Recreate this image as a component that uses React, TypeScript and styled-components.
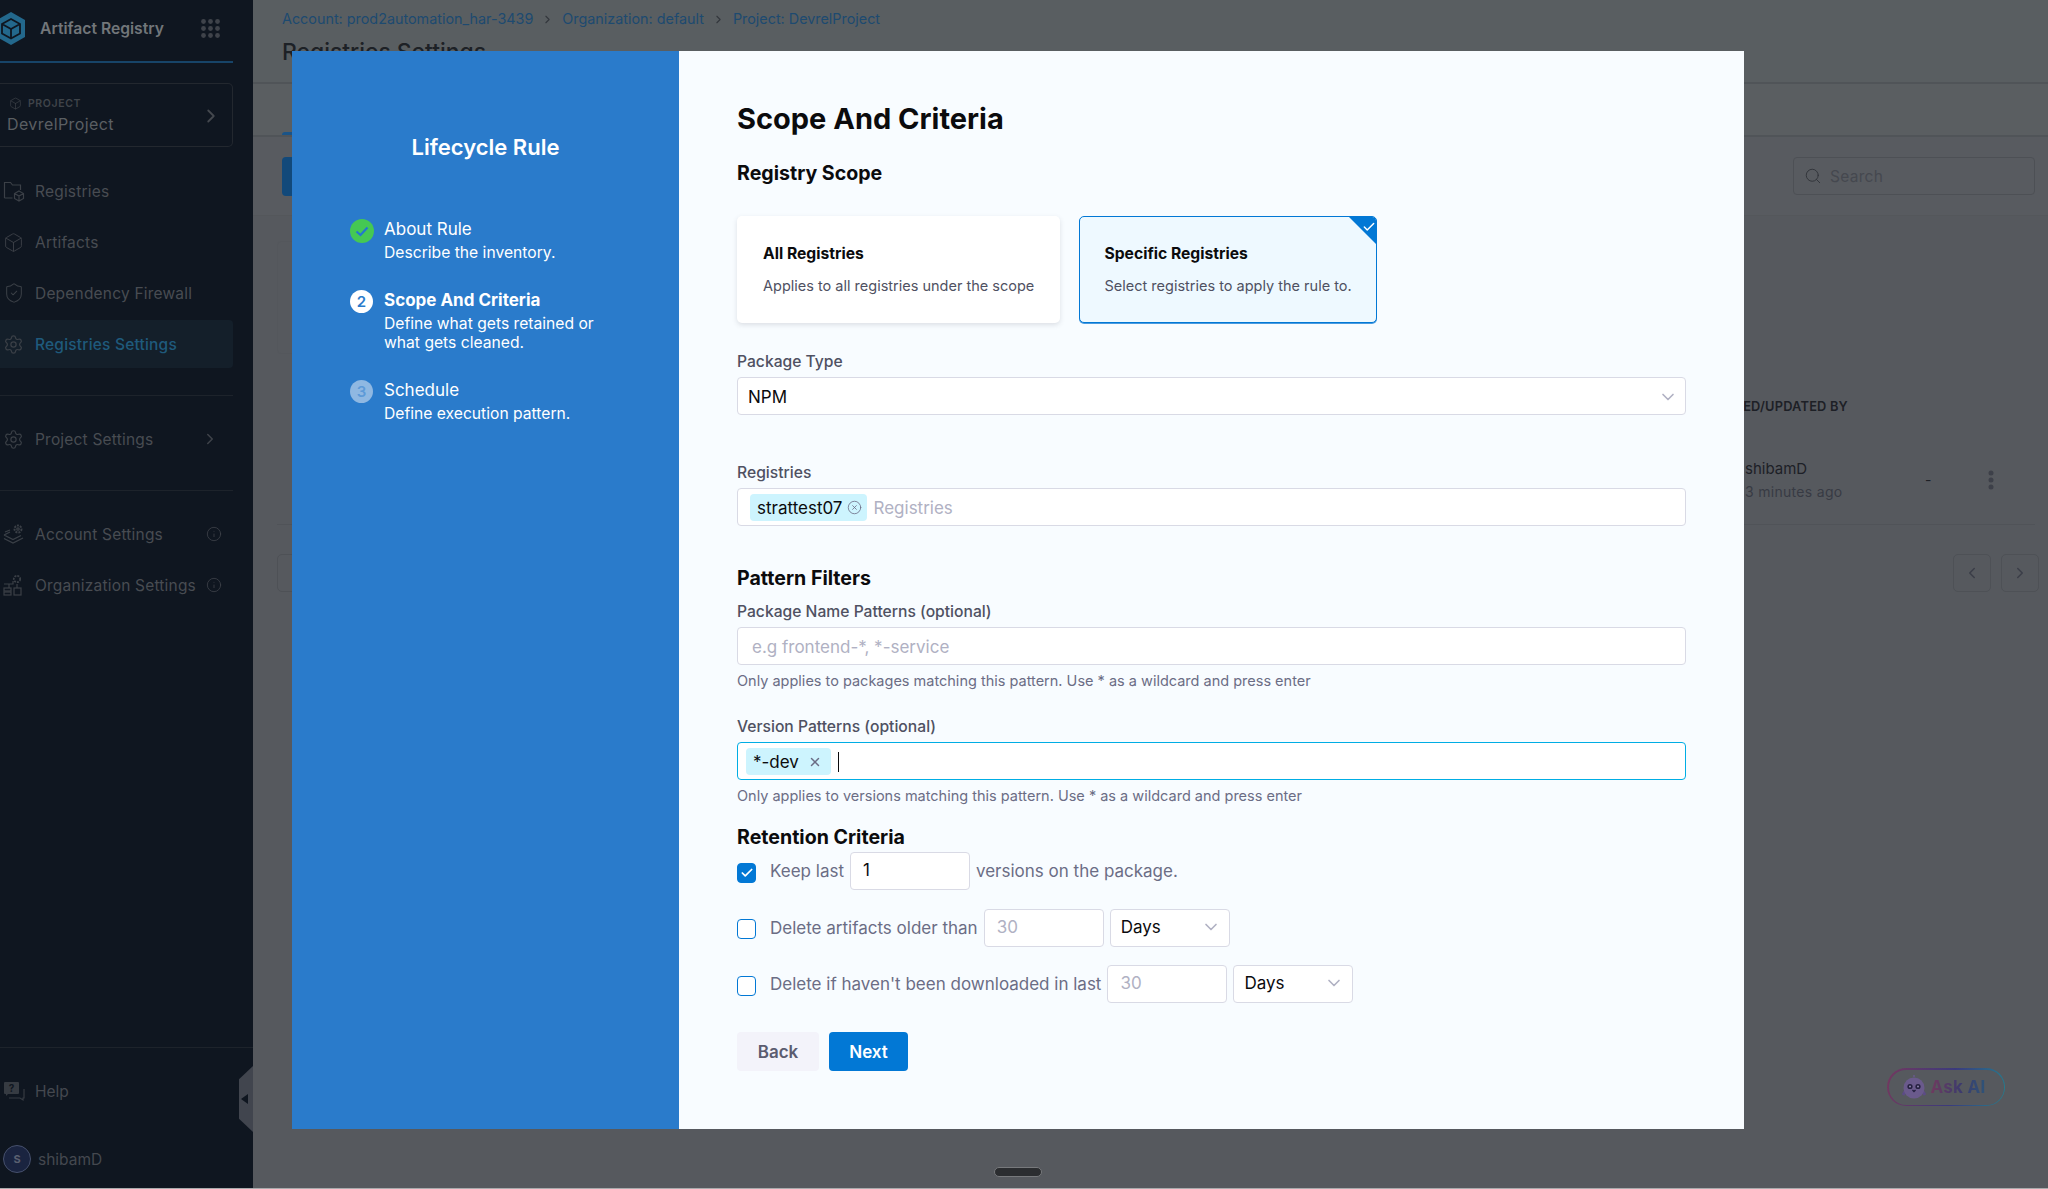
import React from "react";
import styled, { createGlobalStyle } from "styled-components";
import { Box, Check, ChevronDown, ChevronLeft, ChevronRight, CircleX, Info, Search, Settings, ShieldCheck, X } from "lucide-react";

const GlobalStyle = createGlobalStyle`
  html, body {
    margin: 0;
    padding: 0;
    background: #a9abad;
  }
  * {
    box-sizing: border-box;
  }
  body {
    font-family: Inter, "Liberation Sans", sans-serif;
  }
`;

const Page = styled.div`
  display: flex;
  height: 1188px;
  overflow: hidden;
  position: relative;
  width: 2048px;
`;

/* sidebar */

const Sidebar = styled.aside`
  background: #0f1620;
  display: flex;
  flex-direction: column;
  flex-shrink: 0;
  height: 100%;
  width: 253px;
`;

const SideTop = styled.div`
  display: flex;
  flex-direction: column;
  width: 233px;
`;

const Brand = styled.div`
  align-items: center;
  border-bottom: 2px solid #174468;
  display: flex;
  height: 63px;
  padding-bottom: 5px;
`;

const Logo = styled.svg`
  flex-shrink: 0;
  margin-left: -4px;
  margin-right: 14px;
`;

const BrandName = styled.span`
  color: #72767a;
  flex: 1;
  font-size: 15.67px;
  font-weight: 600;
`;

const Dots = styled.svg`
  margin-right: 13px;
`;

const ProjectBox = styled.div`
  align-items: center;
  border: 1px solid #23282f;
  border-left: 0;
  border-radius: 0 5px 5px 0;
  display: flex;
  height: 64px;
  justify-content: space-between;
  margin-top: 20px;
  padding: 2px 10px 0 7px;
`;

const ProjectLabel = styled.div`
  align-items: center;
  color: #3f444a;
  display: flex;
  font-size: 10.5px;
  font-weight: 600;
  gap: 6px;
  letter-spacing: 0.6px;
  margin-left: 2px;
`;

const ProjectName = styled.div`
  color: #5b5f63;
  font-size: 16px;
  letter-spacing: 0.4px;
  line-height: 22px;
  margin-top: 3px;
`;

const Nav = styled.nav<{ $top: number }>`
  display: flex;
  flex-direction: column;
  gap: 3px;
  margin-top: ${({ $top }) => $top}px;
`;

const NavItem = styled.div<{ $active?: boolean }>`
  align-items: center;
  background: ${({ $active }) => ($active ? "#141f2a" : "transparent")};
  border-radius: 0 4px 4px 0;
  color: ${({ $active }) => ($active ? "#1f5a7c" : "#484c52")};
  display: flex;
  font-size: 15.5px;
  font-weight: ${({ $active }) => ($active ? 500 : 400)};
  height: 48px;
  letter-spacing: 0.2px;
  padding-left: 3px;
  padding-right: 11px;
`;

const NavIcon = styled.span`
  align-items: center;
  color: #3b4047;
  display: flex;
  flex-shrink: 0;
  height: 22px;
  margin-right: 10px;
  width: 22px;
`;

const NavText = styled.span`
  flex: 1;
  white-space: nowrap;
`;

const NavChevron = styled(ChevronRight)`
  margin-right: 3px;
`;

const SideRule = styled.div`
  background: #1d232b;
  height: 1px;
  margin-top: 27px;
`;

const SideBottom = styled.div`
  border-top: 1px solid #1d232b;
  display: flex;
  flex-direction: column;
  margin-top: auto;
  height: 141px;
`;

const HelpRow = styled.div`
  align-items: center;
  color: #44484f;
  display: flex;
  font-size: 15.5px;
  height: 44px;
  margin-top: 21px;
  padding-left: 3px;
`;

const UserRow = styled.div`
  align-items: center;
  color: #44484f;
  display: flex;
  font-size: 15.5px;
  gap: 7px;
  margin-top: 32px;
  padding-left: 3px;
`;

const Avatar = styled.div`
  align-items: center;
  background: #1a2440;
  border: 1px solid #46506c;
  border-radius: 50%;
  color: #5a6070;
  display: flex;
  font-size: 11px;
  font-weight: 700;
  height: 28px;
  justify-content: center;
  width: 28px;
`;

const CollapseTab = styled.div`
  background: #41454e;
  clip-path: polygon(100% 0, 100% 100%, 0 80%, 0 20%);
  height: 66px;
  left: 239px;
  position: absolute;
  top: 1066px;
  width: 14px;

  &::after {
    border-bottom: 5px solid transparent;
    border-right: 7px solid #0f1620;
    border-top: 5px solid transparent;
    content: "";
    left: 2px;
    position: absolute;
    top: 28px;
  }
`;

/* dimmed page behind the dialog */

const Main = styled.main`
  background: #56595e;
  display: flex;
  flex: 1;
  flex-direction: column;
  min-width: 0;
`;

const PageHead = styled.header`
  background: #595e61;
  border-bottom: 2px solid #505458;
  height: 84px;
  padding: 10px 0 0 29px;
`;

const Crumbs = styled.div`
  align-items: center;
  color: #1d4a70;
  display: flex;
  font-size: 14.37px;
  gap: 8px;
  line-height: 18px;
`;

const PageTitle = styled.h1`
  color: #1d2126;
  font-size: 22.9px;
  font-weight: 500;
  line-height: 30px;
  margin: 9px 0 0;
`;

const TabRow = styled.div`
  background: #5a5e61;
  border-bottom: 2px solid #505458;
  height: 53px;
  padding-left: 29px;
  position: relative;
`;

const TabMark = styled.div`
  background: #1b5487;
  border-radius: 3px 3px 0 0;
  height: 3px;
  margin-top: 48px;
  width: 40px;
`;

const Toolbar = styled.div`
  align-items: center;
  background: #585b60;
  border-bottom: 1px solid #54575b;
  display: flex;
  height: 79px;
  justify-content: space-between;
  padding: 0 13px 0 29px;
`;

const NewButton = styled.div`
  background: #12497a;
  border-radius: 4px;
  height: 39px;
  width: 120px;
`;

const SearchBox = styled.div`
  align-items: center;
  border: 1px solid #4d5055;
  border-radius: 4px;
  color: #45484f;
  display: flex;
  font-size: 15.5px;
  gap: 8px;
  height: 38px;
  letter-spacing: 0.3px;
  padding-left: 10px;
  width: 242px;
`;

const Content = styled.div`
  display: flex;
  flex-direction: column;
  padding: 25px 9px 0 24px;
`;

const SummaryCard = styled.div`
  border: 1px solid #54575c;
  border-radius: 4px;
  height: 113px;
  width: 400px;
`;

const TableGrid = styled.div`
  display: grid;
  grid-template-columns: 1423px 225px 50px 1fr;
`;

const TableHead = styled(TableGrid)`
  color: #1d2026;
  font-size: 12.8px;
  font-weight: 600;
  letter-spacing: 0.2px;
  line-height: 16px;
  margin-top: 45px;
`;

const TableRow = styled(TableGrid)`
  align-items: center;
  border-bottom: 1px solid #505358;
  height: 110px;
  margin-right: 4px;
  padding-top: 20px;
`;

const OwnerCell = styled.div`
  padding-left: 45px;
`;

const OwnerName = styled.div`
  color: #1d2026;
  font-size: 15px;
  line-height: 22px;
`;

const OwnerTime = styled.div`
  color: #383b44;
  font-size: 14px;
  letter-spacing: 0.3px;
  line-height: 20px;
  margin-top: 2px;
`;

const Dash = styled.div`
  color: #1d2026;
  font-size: 14px;
`;

const Kebab = styled.svg`
  margin-left: 13px;
`;

const Pager = styled.div`
  display: flex;
  gap: 10px;
  justify-content: space-between;
  margin-top: 29px;
`;

const PagerGroup = styled.div`
  display: flex;
  gap: 10px;
`;

const PagerButton = styled.div`
  align-items: center;
  border: 1px solid #4e5156;
  border-radius: 5px;
  color: #3b3e48;
  display: flex;
  height: 38px;
  justify-content: center;
  width: 38px;
`;

const PagerLeft = styled(PagerButton)`
  width: 40px;
`;

const AskAi = styled.div`
  background: linear-gradient(100deg, #74375f, #3b3a7c 55%, #237f90);
  border-radius: 19px;
  bottom: 82px;
  height: 38px;
  padding: 1.5px;
  position: absolute;
  right: 43px;
  width: 118px;
`;

const AskAiInner = styled.div`
  align-items: center;
  background: #56595e;
  border-radius: 17px;
  display: flex;
  gap: 5px;
  height: 100%;
  padding-left: 13px;
`;

const AskAiText = styled.span`
  background: linear-gradient(90deg, #6f3a5f, #3c3a6e 55%, #2d5478);
  background-clip: text;
  -webkit-background-clip: text;
  color: transparent;
  font-size: 17px;
  font-weight: 700;
  letter-spacing: 0.3px;
`;

const Handle = styled.div`
  background: #2b2d30;
  border: 1px solid #77797c;
  border-radius: 5px;
  height: 10px;
  left: 994px;
  position: absolute;
  top: 1167px;
  width: 48px;
`;

/* dialog */

const Dialog = styled.section`
  display: flex;
  height: 1078px;
  left: 292px;
  position: absolute;
  top: 51px;
  width: 1452px;
`;

const StepPanel = styled.div`
  background: #2a7bcb;
  color: #fff;
  flex-shrink: 0;
  padding-top: 81px;
  width: 387px;
`;

const StepPanelTitle = styled.h2`
  font-size: 22px;
  font-weight: 600;
  line-height: 30px;
  margin: 0;
  text-align: center;
`;

const StepList = styled.ol`
  display: flex;
  flex-direction: column;
  gap: 28px;
  list-style: none;
  margin: 57px 0 0;
  padding: 0 0 0 58px;
`;

const Step = styled.li`
  display: flex;
  gap: 10px;
`;

const StepNumber = styled.div<{ $current?: boolean }>`
  align-items: center;
  background: ${({ $current }) => ($current ? "#fff" : "#8fb8e2")};
  border-radius: 50%;
  color: ${({ $current }) => ($current ? "#2a7bcb" : "#5d9ad8")};
  display: flex;
  flex-shrink: 0;
  font-size: 15px;
  font-weight: 600;
  height: 23px;
  justify-content: center;
  margin-right: 1px;
  width: 23px;
`;

const StepName = styled.div<{ $current?: boolean }>`
  font-size: 17px;
  font-weight: ${({ $current }) => ($current ? 700 : 400)};
  line-height: 20px;
`;

const StepHint = styled.div`
  font-size: 15.67px;
  line-height: 19px;
  margin-top: 4px;
`;

const FormPanel = styled.div`
  background: #f8fcff;
  flex: 1;
  padding: 50px 58px 0;
`;

const FormTitle = styled.h2`
  color: #0b0b0d;
  font-size: 29px;
  font-weight: 700;
  line-height: 36px;
  margin: 0;
`;

const SectionTitle = styled.h3<{ $top: number }>`
  color: #0b0b0d;
  font-size: 19.6px;
  font-weight: 700;
  line-height: 24px;
  margin: ${({ $top }) => $top}px 0 0;
`;

const CardRow = styled.div`
  display: flex;
  gap: 19px;
  margin-top: 31px;
`;

const ScopeCard = styled.div<{ $selected?: boolean }>`
  background: ${({ $selected }) => ($selected ? "#eef9ff" : "#fff")};
  border: ${({ $selected }) => ($selected ? "1.5px solid #0278d5" : "0")};
  border-radius: 5px;
  box-shadow: ${({ $selected }) => ($selected ? "0 1px 0 #4a9be0" : "0 2px 5px rgba(96, 97, 112, 0.18)")};
  height: 107px;
  overflow: hidden;
  padding: ${({ $selected }) => ($selected ? "25.5px 24.5px" : "27px 26px")};
  position: relative;
  width: ${({ $selected }) => ($selected ? 298 : 323)}px;
`;

const CardCorner = styled.div`
  background: #0278d5;
  clip-path: polygon(0 0, 100% 0, 100% 100%);
  color: #fff;
  height: 31px;
  padding: 3px 0 0 15px;
  position: absolute;
  right: -2px;
  top: -2px;
  width: 31px;
`;

const CardTitle = styled.div`
  color: #0b0b0d;
  font-size: 15.67px;
  font-weight: 700;
  line-height: 22px;
`;

const CardText = styled.div`
  color: #4f5162;
  font-size: 14.5px;
  line-height: 20px;
  margin-top: 11px;
  white-space: nowrap;
`;

const FieldLabel = styled.label<{ $top: number }>`
  color: #4f5162;
  display: block;
  font-size: 15.67px;
  font-weight: 500;
  line-height: 20px;
  margin-top: ${({ $top }) => $top}px;
`;

const InputShell = styled.div<{ $focused?: boolean; $padLeft?: number }>`
  align-items: center;
  background: #fff;
  border: 1px solid ${({ $focused }) => ($focused ? "#00ade4" : "#d9dae5")};
  border-radius: 4px;
  color: #0b0b0d;
  display: flex;
  font-size: 17px;
  height: 38px;
  margin-top: 5px;
  padding: 1px 7px 0 ${({ $padLeft }) => $padLeft ?? 10}px;
`;

const SelectValue = styled.span`
  flex: 1;
`;

const Placeholder = styled.span`
  color: #b0b1c3;
`;

const ChipPlaceholder = styled(Placeholder)`
  margin-left: 6px;
`;

const Chip = styled.span`
  align-items: center;
  background: #cdf4fe;
  border-radius: 4px;
  color: #0b0b0d;
  display: flex;
  font-size: 17px;
  height: 27px;
  padding: 0 5px 0 7px;
`;

const ChipClose = styled.span<{ $wide?: boolean }>`
  align-items: center;
  color: #6b6d85;
  display: flex;
  margin-left: ${({ $wide }) => ($wide ? 9 : 5)}px;
  margin-right: ${({ $wide }) => ($wide ? 4 : 0)}px;
`;

const Caret = styled.span`
  background: #0b0b0d;
  height: 20px;
  margin-left: 7px;
  width: 1px;
`;

const HelpText = styled.div`
  color: #6b6d85;
  font-size: 14.5px;
  line-height: 18px;
  margin-top: 7px;
`;

const OptionRow = styled.div<{ $top: number }>`
  align-items: center;
  color: #6b6d85;
  display: flex;
  font-size: 17px;
  gap: 6px;
  margin-top: ${({ $top }) => $top}px;
`;

const CheckMark = styled.span<{ $on?: boolean }>`
  align-items: center;
  background: ${({ $on }) => ($on ? "#0278d5" : "#fff")};
  border: 1px solid #0278d5;
  border-radius: 4px;
  color: #fff;
  display: flex;
  height: 20px;
  justify-content: center;
  margin-right: 8px;
  margin-top: 3px;
  width: 19px;
`;

const SmallField = styled.div<{ $muted?: boolean }>`
  align-items: center;
  background: #fff;
  border: 1px solid #d9dae5;
  border-radius: 4px;
  color: ${({ $muted }) => ($muted ? "#b0b1c3" : "#0b0b0d")};
  display: flex;
  font-size: 17px;
  height: 38px;
  justify-content: space-between;
  padding: 0 8px 2px 12px;
  width: 120px;
`;

const DaysSelect = styled(SmallField)`
  padding-left: 10px;
`;

const Actions = styled.div`
  display: flex;
  gap: 10px;
  margin-top: 29px;
`;

const ActionButton = styled.button<{ $primary?: boolean }>`
  background: ${({ $primary }) => ($primary ? "#0278d5" : "#f3f3fa")};
  border: 0;
  border-radius: 4px;
  color: ${({ $primary }) => ($primary ? "#fff" : "#5b5c70")};
  font-family: inherit;
  font-size: 17px;
  font-weight: 600;
  height: 39px;
  width: ${({ $primary }) => ($primary ? 79 : 82)}px;
`;

const RegistryIcon = () => (
  <svg width="22" height="22" viewBox="0 0 22 22" fill="none" stroke="currentColor" strokeWidth="1.2">
    <path d="M1.5 18V2.5h6l2 2.5h8v5M1.5 18h8" />
    <path d="M16 11l4.5 2.5v5L16 21l-4.5-2.5v-5zM11.5 13.5L16 16l4.5-2.5M16 16v5" />
  </svg>
);

const AccountIcon = () => (
  <svg width="22" height="22" viewBox="0 0 22 22" fill="none" stroke="currentColor" strokeWidth="1.3">
    <path d="M1 12l9 4.5 8-4M1 15.5l9 4.5 10-5M1 12l6-3M2 9l5-2" />
    <circle cx="15" cy="6" r="3.5" strokeDasharray="2 1" strokeWidth="2" />
    <circle cx="15" cy="6" r="1.2" />
  </svg>
);

const OrgIcon = () => (
  <svg width="22" height="22" viewBox="0 0 22 22" fill="none" stroke="currentColor" strokeWidth="1.2">
    <circle cx="14" cy="5" r="3.2" strokeDasharray="2 1" strokeWidth="1.8" />
    <path d="M1 10h9v-3M6 10v4M14 10v4" />
    <rect x="1" y="14" width="7" height="3" />
    <rect x="1" y="18" width="7" height="3" />
    <rect x="11" y="14" width="7" height="7" />
  </svg>
);

const HelpIcon = () => (
  <svg width="22" height="22" viewBox="0 0 22 22">
    <path d="M2 2h13a1 1 0 0 1 1 1v10a1 1 0 0 1-1 1H5l-2 2v-2H2a1 1 0 0 1-1-1V3a1 1 0 0 1 1-1z" fill="#363b42" />
    <text x="8.5" y="11.5" fontSize="10" fontWeight="700" textAnchor="middle" fill="#0f1620">?</text>
    <path d="M6 18h11l3 2v-2h1V9" fill="none" stroke="#363b42" strokeWidth="1.2" />
  </svg>
);

const StepDone = () => (
  <svg width="24" height="24" viewBox="0 0 24 24">
    <circle cx="12" cy="12" r="12" fill="#45c853" />
    <path d="M6.5 12.5l4 3.5 7-7.5" fill="none" stroke="#2277d0" strokeWidth="2.2" />
  </svg>
);

const Mascot = () => (
  <svg width="24" height="26" viewBox="0 0 24 26">
    <circle cx="12" cy="2" r="1" fill="#6a5a8c" />
    <path d="M1 21l3-5M23 21l-3-5" stroke="#5c4c85" strokeWidth="3" />
    <circle cx="12" cy="14" r="10.5" fill="#6a5a8c" />
    <circle cx="8" cy="12.5" r="2.6" fill="#252040" />
    <circle cx="16" cy="12.5" r="2.6" fill="#252040" />
    <circle cx="8" cy="12.5" r="1" fill="#8f84b0" />
    <circle cx="16" cy="12.5" r="1" fill="#8f84b0" />
    <path d="M10.5 16l1.5 1.5 1.5-1.5" fill="none" stroke="#252040" strokeWidth="1.4" />
  </svg>
);

const dots = [0, 1, 2].flatMap((row) => [0, 1, 2].map((col) => ({ row, col })));

const Sidenav = () => (
  <Sidebar>
    <SideTop>
      <Brand>
        <Logo width="30" height="33" viewBox="0 0 30 33">
          <path d="M15 0l14 8v17l-14 8-14-8V8z" fill="#23688c" />
          <path d="M15 7l9 5v9.5l-9 5-9-5V12zM6 12l9 5 9-5M15 17v9.5" fill="none" stroke="#0f1620" strokeWidth="1.8" />
        </Logo>
        <BrandName>Artifact Registry</BrandName>
        <Dots width="19" height="19" viewBox="0 0 19 19">
          {dots.map(({ row, col }) => (
            <circle key={`${row}-${col}`} cx={2.5 + col * 7} cy={2.5 + row * 7} r="2.4" fill="#3f434a" />
          ))}
        </Dots>
      </Brand>
      <ProjectBox>
        <div>
          <ProjectLabel>
            <Box size={13} strokeWidth={1.2} />
            PROJECT
          </ProjectLabel>
          <ProjectName>DevrelProject</ProjectName>
        </div>
        <ChevronRight size={22} color="#44484e" />
      </ProjectBox>
      <Nav $top={20}>
        <NavItem>
          <NavIcon><RegistryIcon /></NavIcon>
          <NavText>Registries</NavText>
        </NavItem>
        <NavItem>
          <NavIcon><Box size={21} strokeWidth={1.1} /></NavIcon>
          <NavText>Artifacts</NavText>
        </NavItem>
        <NavItem>
          <NavIcon><ShieldCheck size={22} strokeWidth={1.1} /></NavIcon>
          <NavText>Dependency Firewall</NavText>
        </NavItem>
        <NavItem $active>
          <NavIcon><Settings size={21} strokeWidth={1.4} /></NavIcon>
          <NavText>Registries Settings</NavText>
        </NavItem>
      </Nav>
      <SideRule />
      <Nav $top={19}>
        <NavItem>
          <NavIcon><Settings size={21} strokeWidth={1.3} /></NavIcon>
          <NavText>Project Settings</NavText>
          <NavChevron size={18} color="#3f434a" />
        </NavItem>
      </Nav>
      <SideRule />
      <Nav $top={19}>
        <NavItem>
          <NavIcon><AccountIcon /></NavIcon>
          <NavText>Account Settings</NavText>
          <Info size={16} strokeWidth={1.2} color="#3f434a" />
        </NavItem>
        <NavItem>
          <NavIcon><OrgIcon /></NavIcon>
          <NavText>Organization Settings</NavText>
          <Info size={16} strokeWidth={1.2} color="#3f434a" />
        </NavItem>
      </Nav>
    </SideTop>
    <SideBottom>
      <HelpRow>
        <NavIcon><HelpIcon /></NavIcon>
        Help
      </HelpRow>
      <UserRow>
        <Avatar>S</Avatar>
        shibamD
      </UserRow>
    </SideBottom>
  </Sidebar>
);

const Background = () => (
  <Main>
    <PageHead>
      <Crumbs>
        Account: prod2automation_har-3439
        <ChevronRight size={13} color="#33373d" />
        Organization: default
        <ChevronRight size={13} color="#33373d" />
        Project: DevrelProject
      </Crumbs>
      <PageTitle>Registries Settings</PageTitle>
    </PageHead>
    <TabRow>
      <TabMark />
    </TabRow>
    <Toolbar>
      <NewButton />
      <SearchBox>
        <Search size={18} strokeWidth={1.2} color="#2f3238" />
        Search
      </SearchBox>
    </Toolbar>
    <Content>
      <SummaryCard />
      <TableHead>
        <span />
        <span>CREATED/UPDATED BY</span>
      </TableHead>
      <TableRow>
        <span />
        <OwnerCell>
          <OwnerName>shibamD</OwnerName>
          <OwnerTime>3 minutes ago</OwnerTime>
        </OwnerCell>
        <Dash>-</Dash>
        <Kebab width="6" height="20" viewBox="0 0 6 20">
          <circle cx="3" cy="3" r="2.5" fill="#3d4049" />
          <circle cx="3" cy="10" r="2.5" fill="#3d4049" />
          <circle cx="3" cy="17" r="2.5" fill="#3d4049" />
        </Kebab>
      </TableRow>
      <Pager>
        <PagerLeft />
        <PagerGroup>
          <PagerButton><ChevronLeft size={18} /></PagerButton>
          <PagerButton><ChevronRight size={18} /></PagerButton>
        </PagerGroup>
      </Pager>
    </Content>
  </Main>
);

const StepsColumn = () => (
  <StepPanel>
    <StepPanelTitle>Lifecycle Rule</StepPanelTitle>
    <StepList>
      <Step>
        <StepDone />
        <div>
          <StepName>About Rule</StepName>
          <StepHint>Describe the inventory.</StepHint>
        </div>
      </Step>
      <Step>
        <StepNumber $current>2</StepNumber>
        <div>
          <StepName $current>Scope And Criteria</StepName>
          <StepHint>
            Define what gets retained or
            <br />
            what gets cleaned.
          </StepHint>
        </div>
      </Step>
      <Step>
        <StepNumber>3</StepNumber>
        <div>
          <StepName>Schedule</StepName>
          <StepHint>Define execution pattern.</StepHint>
        </div>
      </Step>
    </StepList>
  </StepPanel>
);

const ScopeForm = () => (
  <FormPanel>
    <FormTitle>Scope And Criteria</FormTitle>
    <SectionTitle $top={24}>Registry Scope</SectionTitle>
    <CardRow>
      <ScopeCard>
        <CardTitle>All Registries</CardTitle>
        <CardText>Applies to all registries under the scope</CardText>
      </ScopeCard>
      <ScopeCard $selected>
        <CardCorner><Check size={14} strokeWidth={2.5} /></CardCorner>
        <CardTitle>Specific Registries</CardTitle>
        <CardText>Select registries to apply the rule to.</CardText>
      </ScopeCard>
    </CardRow>

    <FieldLabel $top={29}>Package Type</FieldLabel>
    <InputShell>
      <SelectValue>NPM</SelectValue>
      <ChevronDown size={20} color="#b0b1c3" />
    </InputShell>

    <FieldLabel $top={48}>Registries</FieldLabel>
    <InputShell $padLeft={12}>
      <Chip>
        strattest07
        <ChipClose><CircleX size={15} strokeWidth={1.3} /></ChipClose>
      </Chip>
      <ChipPlaceholder>Registries</ChipPlaceholder>
    </InputShell>

    <SectionTitle $top={40}>Pattern Filters</SectionTitle>
    <FieldLabel $top={12}>Package Name Patterns (optional)</FieldLabel>
    <InputShell $padLeft={14}>
      <Placeholder>e.g frontend-*, *-service</Placeholder>
    </InputShell>
    <HelpText>Only applies to packages matching this pattern. Use * as a wildcard and press enter</HelpText>

    <FieldLabel $top={27}>Version Patterns (optional)</FieldLabel>
    <InputShell $focused $padLeft={8}>
      <Chip>
        *-dev
        <ChipClose $wide><X size={14} strokeWidth={2.5} /></ChipClose>
      </Chip>
      <Caret />
    </InputShell>
    <HelpText>Only applies to versions matching this pattern. Use * as a wildcard and press enter</HelpText>

    <SectionTitle $top={20}>Retention Criteria</SectionTitle>
    <OptionRow $top={3}>
      <CheckMark $on><Check size={14} strokeWidth={3} /></CheckMark>
      Keep last
      <SmallField>1</SmallField>
      versions on the package.
    </OptionRow>
    <OptionRow $top={18.5}>
      <CheckMark />
      Delete artifacts older than
      <SmallField $muted>30</SmallField>
      <DaysSelect>
        Days
        <ChevronDown size={20} color="#b0b1c3" />
      </DaysSelect>
    </OptionRow>
    <OptionRow $top={18.5}>
      <CheckMark />
      Delete if haven't been downloaded in last
      <SmallField $muted>30</SmallField>
      <DaysSelect>
        Days
        <ChevronDown size={20} color="#b0b1c3" />
      </DaysSelect>
    </OptionRow>

    <Actions>
      <ActionButton>Back</ActionButton>
      <ActionButton $primary>Next</ActionButton>
    </Actions>
  </FormPanel>
);

const App = () => (
  <>
    <GlobalStyle />
    <Page>
      <Sidenav />
      <Background />
      <CollapseTab />
      <Dialog>
        <StepsColumn />
        <ScopeForm />
      </Dialog>
      <AskAi>
        <AskAiInner>
          <Mascot />
          <AskAiText>Ask AI</AskAiText>
        </AskAiInner>
      </AskAi>
      <Handle />
    </Page>
  </>
);

export default App;
